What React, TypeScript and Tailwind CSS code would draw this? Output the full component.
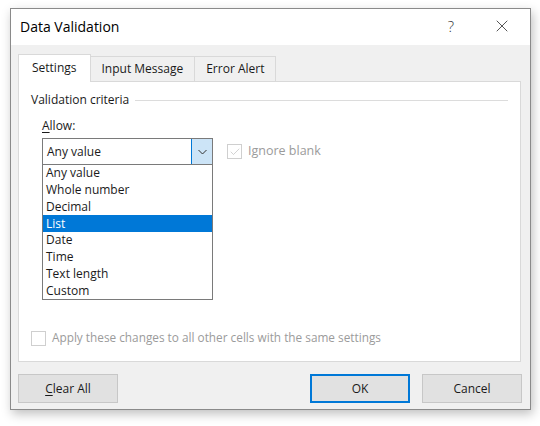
import { Check, X } from 'lucide-react';

const OPTIONS = ['Any value', 'Whole number', 'Decimal', 'List', 'Date', 'Time', 'Text length', 'Custom'];

function Tab({ label, active }: { label: string; active?: boolean }) {
  return active ? (
    <div className="relative z-10 -mb-px flex h-[28px] items-center border border-b-0 border-[#d9d9d9] bg-white px-[13px] pb-[2px]">
      {label}
    </div>
  ) : (
    <div className="flex h-[25px] items-center border border-b-0 border-l-0 border-[#d9d9d9] bg-[#f0f0f0] px-[11px]">
      {label}
    </div>
  );
}

function Button({ children, primary }: { children: React.ReactNode; primary?: boolean }) {
  return (
    <button
      type="button"
      className={
        'flex h-[29px] w-[100px] items-center justify-center bg-[#e1e1e1] text-[#1a1a1a] ' +
        (primary ? 'border-2 border-[#0078d7]' : 'border border-[#c7c7c7]')
      }
    >
      {children}
    </button>
  );
}

export default function App() {
  return (
    <div
      className="h-[426px] w-[540px] overflow-hidden bg-white pl-[10px] pt-[8px] text-[12px] text-[#1a1a1a]"
      style={{ fontFamily: '"Open Sans", "Noto Sans", sans-serif' }}
    >
      <div className="flex h-[402px] w-[521px] flex-col border border-[#8a8a8a] bg-[#f0f0f0] shadow-[2px_4px_10px_rgba(0,0,0,0.25)]">
        {/* title bar */}
        <div className="flex h-[36px] shrink-0 items-center bg-white pb-[2px] pl-[9px]">
          <span className="text-[14px] text-[#000]">Data Validation</span>
          <span className="ml-auto mr-[38px] text-[15px] font-light text-[#333]">?</span>
          <X size={20} strokeWidth={1} className="mr-[18px] text-[#333]" />
        </div>

        {/* tabs */}
        <div className="mt-[9px] flex items-end pl-[7px]">
          <Tab label="Settings" active />
          <Tab label="Input Message" />
          <Tab label="Error Alert" />
        </div>

        {/* panel */}
        <div className="relative mr-[9px] ml-[7px] flex h-[281px] flex-col border border-[#d9d9d9] bg-white px-[12px]">
          <div className="mt-[9px] flex items-center gap-[6px]">
            <span>Validation criteria</span>
            <div className="h-px flex-1 bg-[#dcdcdc]" />
          </div>

          <div className="mt-[8px] ml-[11px]">
            <span>
              <span className="underline underline-offset-2">A</span>llow:
            </span>
          </div>

          <div className="mt-[3px] ml-[11px] flex items-center">
            <div className="relative">
              <div className="flex h-[27px] w-[171px] items-center border border-[#7a7a7a] bg-white pl-[4px]">
                <span className="flex-1">Any value</span>
                <div className="flex h-full w-[21px] items-center justify-center border-l border-[#0078d7] bg-[#cce4f7]">
                  <svg width="9" height="6" viewBox="0 0 9 6" fill="none">
                    <path d="M0.5 1L4.5 5L8.5 1" stroke="#333" strokeWidth="1" />
                  </svg>
                </div>
              </div>
              <div className="absolute left-0 top-[26px] z-20 flex w-[171px] flex-col border border-[#7a7a7a] bg-white">
                {OPTIONS.map((o) => (
                  <div
                    key={o}
                    className={
                      'flex h-[16.75px] items-center pl-[3px] ' +
                      (o === 'List' ? 'bg-[#0078d7] text-white' : '')
                    }
                  >
                    {o}
                  </div>
                ))}
              </div>
            </div>

            <div className="ml-[14px] flex items-center gap-[6px] text-[#9b9b9b]">
              <div className="flex h-[15px] w-[15px] items-center justify-center border border-[#cfcfcf] bg-white">
                <Check size={12} strokeWidth={1.2} className="text-[#b5b5b5]" />
              </div>
              <span className="text-[12.5px]">Ignore blank</span>
            </div>
          </div>

          <div className="mt-auto mb-[14px] flex items-center gap-[6px] text-[#9b9b9b]">
            <div className="h-[15px] w-[15px] border border-[#cfcfcf] bg-white" />
            <span className="text-[11.8px]">Apply these changes to all other cells with the same settings</span>
          </div>
        </div>

        {/* buttons */}
        <div className="mt-[12px] flex items-center pl-[7px] pr-[8px]">
          <Button>
            <span>
              <span className="underline underline-offset-2">C</span>lear All
            </span>
          </Button>
          <div className="flex-1" />
          <Button primary>OK</Button>
          <div className="w-[12px]" />
          <Button>Cancel</Button>
        </div>
      </div>
    </div>
  );
}
